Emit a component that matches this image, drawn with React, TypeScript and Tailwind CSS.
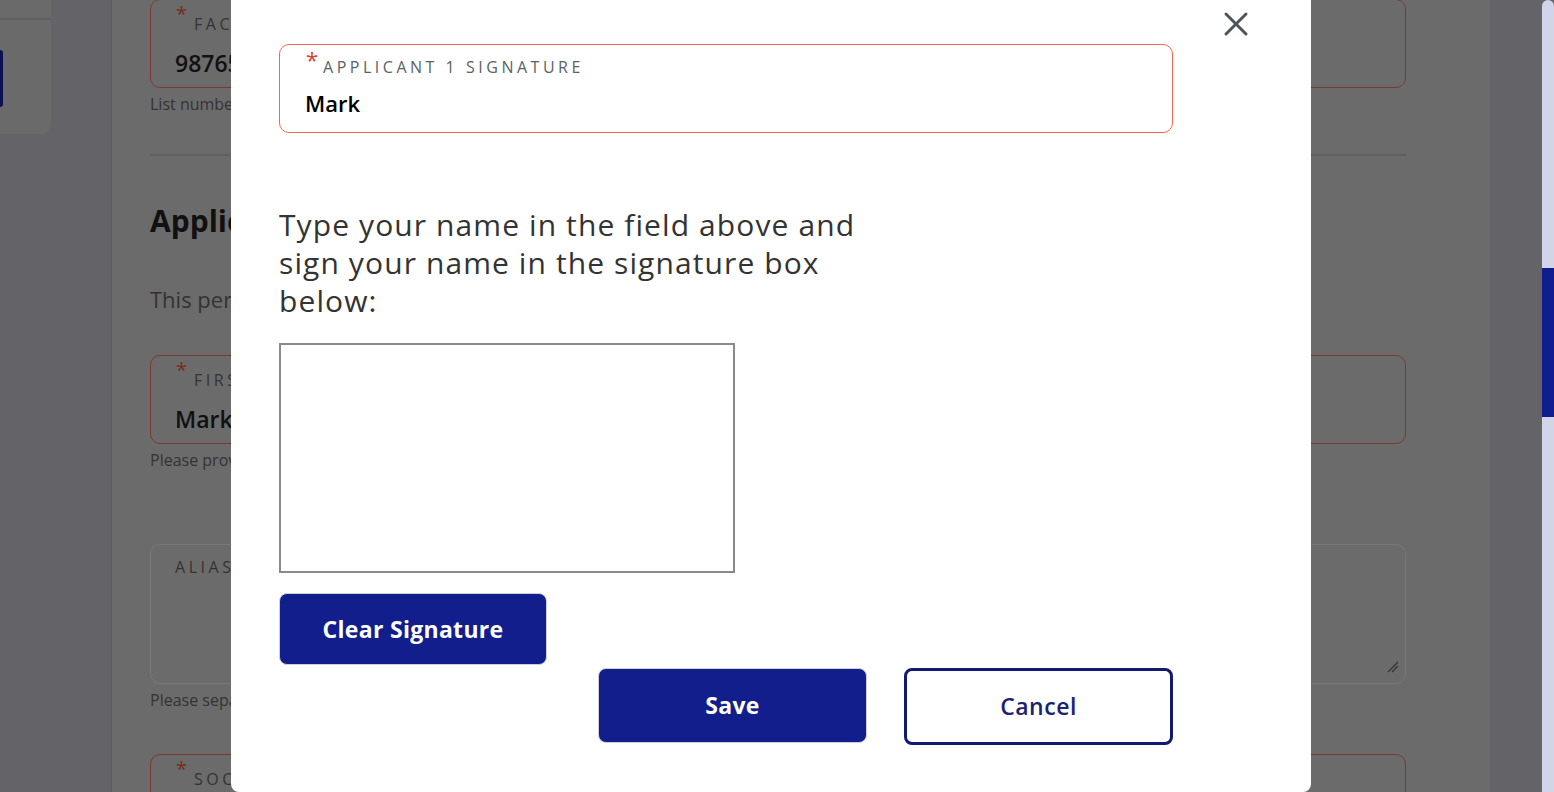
import {X} from "lucide-react";

// dimmed page behind the modal
function BgField({label, value, required = true, className = ""}: { label: string, value?: string, required?: boolean, className?: string }) {
    return (
        <div className={"relative h-[89px] rounded-[10px] border border-[#7a3a30] pl-[24px] " + className}>
            {required && <span className="absolute left-[25px] top-[4px] text-[20px] leading-none text-[#7a2a1c]">*</span>}
            <div className="pl-[19px] pt-[12px] text-[16px] tracking-[0.22em] text-[#333] uppercase">{label}</div>
            {value && <div className="mt-[10px] text-[23px] font-semibold text-[#111]">{value}</div>}
        </div>
    );
}

export default function App() {
    return (
        <div className="relative flex h-[792px] w-full overflow-hidden bg-[#646468] font-['Open_Sans',sans-serif]">
            <aside className="h-[134px] w-[51px] shrink-0 rounded-br-[10px] bg-[#6a6a6a]">
                <div className="mt-[18px] h-[2px] bg-[#5e5f66]"/>
                <div className="mt-[30px] h-[57px] w-[3px] rounded-r bg-[#0c1151]"/>
            </aside>

            <main className="ml-[60px] w-[1379px] shrink-0 border-l border-[#5b5b60] bg-[#6b6b6b] pl-[38px] pr-[84px]">
                <BgField label="Facility number" value="98765" className="-mt-px"/>
                <p className="mt-[4px] text-[16px] text-[#333]">List number of the facility</p>
                <div className="mt-[38px] h-[2px] bg-[#5e5e66]"/>
                <h2 className="mt-[42px] text-[30px] font-bold text-[#111]">Applicant 1</h2>
                <p className="mt-[40px] text-[22px] text-[#333]">This person is the applicant</p>
                <BgField label="First name" value="Mark" className="mt-[39px]"/>
                <p className="mt-[4px] text-[16px] text-[#333]">Please provide your legal first name</p>
                <div className="relative mt-[72px] h-[140px] rounded-[10px] border border-[#777] pl-[24px]">
                    <div className="pt-[10px] text-[16px] tracking-[0.22em] text-[#333]">ALIAS</div>
                    <svg className="absolute bottom-[10px] right-[6px]" width="12" height="12" viewBox="0 0 12 12">
                        <path d="M1 11 L11 1 M5 11 L11 5" stroke="#333" strokeWidth="1.2"/>
                    </svg>
                </div>
                <p className="mt-[4px] text-[16px] text-[#333]">Please separate aliases with commas</p>
                <BgField label="Social security number" className="mt-[42px]"/>
            </main>

            <div className="ml-auto h-full w-[12px] shrink-0 rounded-t-full bg-[#d2d4ea]">
                <div className="mt-[268px] h-[149px] bg-[#111d8e]"/>
            </div>

            <div className="absolute left-[231px] top-0 h-[792px] w-[1080px] rounded-b-[8px] bg-white pl-[48px] pt-[44px]">
                <button className="absolute left-[985px] top-[4px] text-[#4b5557]">
                    <X size={40} strokeWidth={1.8}/>
                </button>

                <div className="relative h-[89px] w-[894px] rounded-[10px] border border-[#ec6a50] pl-[25px]">
                    <span className="absolute left-[26px] top-[3px] text-[22px] leading-none text-[#d1442c]">*</span>
                    <div className="pl-[18px] pt-[12px] text-[16px] leading-[20px] tracking-[0.22em] text-[#5a6266]">APPLICANT 1 SIGNATURE</div>
                    <div className="mt-[11px] text-[22px] font-semibold leading-[30px] text-black">Mark</div>
                </div>

                <h3 className="mt-[73px] w-[592px] text-[30px] leading-[38px] tracking-[1.1px] text-[#333]">
                    Type your name in the field above and sign your name in the signature box below:
                </h3>

                <div className="mt-[23px] h-[230px] w-[456px] border-2 border-[#8a8a8a] bg-white"/>

                <button className="mt-[20px] h-[72px] w-[268px] rounded-[8px] border border-[#d0d0d0] bg-[#121e8c] text-[23px] font-bold tracking-[0.3px] text-white">
                    Clear Signature
                </button>

                <div className="mt-[3px] flex w-[894px] justify-end gap-[37px]">
                    <button className="h-[75px] w-[269px] rounded-[8px] border border-[#d0d0d0] bg-[#121e8c] text-[23px] font-bold tracking-[0.3px] text-white">
                        Save
                    </button>
                    <button className="h-[77px] w-[269px] rounded-[8px] border-[3px] border-[#111a70] bg-white text-[23px] font-semibold tracking-[0.5px] text-[#1a2370]">
                        Cancel
                    </button>
                </div>
            </div>
        </div>
    );
}
